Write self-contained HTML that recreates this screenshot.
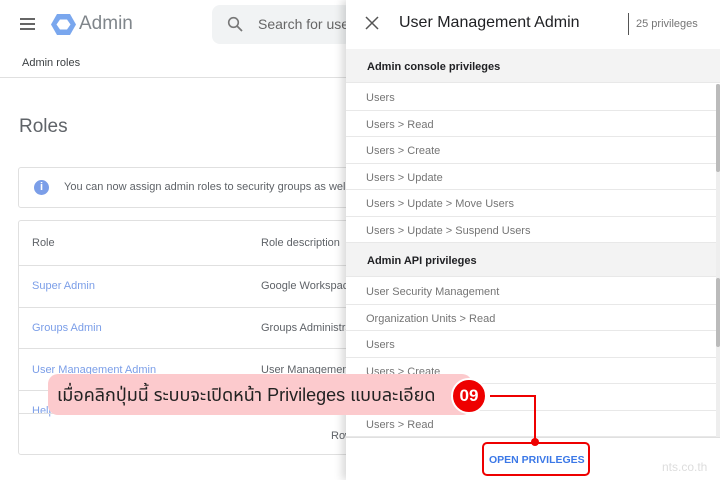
<!DOCTYPE html>
<html><head><meta charset="utf-8"><style>
*{margin:0;padding:0;box-sizing:border-box}
body{width:720px;height:480px;overflow:hidden;background:#fff;font-family:"Liberation Sans",Arial,sans-serif;position:relative;color:#3c4043}
.a{position:absolute}
.t{font-size:12px;color:#5f6368;white-space:nowrap}
.link{color:#7b9ee8}
.row{position:absolute;left:346px;width:370px;height:26.5px;border-bottom:1px solid #e8e8e8;font-size:11px;color:#757575;padding:8px 0 0 20px;background:#fff}
.sec{position:absolute;left:346px;width:374px;height:34px;background:#f3f3f3;font-size:11px;font-weight:bold;color:#202124;padding:12px 0 0 21px;border-bottom:1px solid #e8e8e8}
</style></head><body>
<div class="a" style="left:20px;top:18px;width:15px;height:2px;background:#666;box-shadow:0 5px 0 #666,0 10px 0 #666"></div>
<svg class="a" style="left:51px;top:13px" width="25" height="23" viewBox="0 0 25 23"><polygon points="6,1 19,1 25,11.5 19,22 6,22 0,11.5" fill="#7aa7ee"/><polygon points="9,6.5 16,6.5 19.5,11.5 16,16.5 9,16.5 5.5,11.5" fill="#fff"/></svg>
<div class="a" style="left:79px;top:13px;font-size:19px;color:#80868b">Admin</div>
<div class="a" style="left:212px;top:5px;width:140px;height:39px;background:#f1f3f4;border-radius:8px"></div>
<svg class="a" style="left:227px;top:16px" width="16" height="16" viewBox="0 0 16 16"><circle cx="6.5" cy="6.5" r="4.8" fill="none" stroke="#777" stroke-width="1.6"/><path d="M10 10l5 5" stroke="#777" stroke-width="1.8"/></svg>
<div class="a" style="left:258px;top:16px;font-size:14px;color:#666">Search for users</div>
<div class="a" style="left:22px;top:57px;font-size:11px;color:#3c4043">Admin roles</div>
<div class="a" style="left:0;top:77px;width:346px;height:1px;background:#e0e0e0"></div>
<div class="a" style="left:19px;top:116px;font-size:19px;color:#5f6368">Roles</div>
<div class="a" style="left:18px;top:167px;width:340px;height:41px;border:1px solid #e0e0e0;border-radius:3px"></div>
<div class="a" style="left:34px;top:180px;width:15px;height:15px;border-radius:50%;background:#7b9ee8;color:#fff;font-size:11px;font-weight:bold;text-align:center;line-height:15px">i</div>
<div class="a t" style="left:64px;top:181px;font-size:11px">You can now assign admin roles to security groups as well</div>
<div class="a" style="left:18px;top:220px;width:340px;height:235px;border:1px solid #e0e0e0;border-radius:3px"></div>
<div class="a t" style="left:32px;top:237px;font-size:11px">Role</div>
<div class="a t" style="left:261px;top:237px;font-size:11px">Role description</div>
<div class="a" style="left:19px;top:265px;width:330px;height:1px;background:#e0e0e0"></div>
<div class="a t link" style="left:32px;top:280px;font-size:11px">Super Admin</div>
<div class="a t" style="left:261px;top:280px;font-size:11px">Google Workspace</div>
<div class="a" style="left:19px;top:307px;width:330px;height:1px;background:#e0e0e0"></div>
<div class="a t link" style="left:32px;top:322px;font-size:11px">Groups Admin</div>
<div class="a t" style="left:261px;top:322px;font-size:11px">Groups Administrator</div>
<div class="a" style="left:19px;top:348px;width:330px;height:1px;background:#e0e0e0"></div>
<div class="a t link" style="left:32px;top:364px;font-size:11px">User Management Admin</div>
<div class="a t" style="left:261px;top:364px;font-size:11px">User Management</div>
<div class="a" style="left:19px;top:390px;width:330px;height:1px;background:#e0e0e0"></div>
<div class="a t link" style="left:32px;top:405px;font-size:11px">Help</div>
<div class="a" style="left:19px;top:413px;width:330px;height:1px;background:#e0e0e0"></div>
<div class="a t" style="left:331px;top:430px;font-size:11px">Rows</div>
<div class="a" style="left:346px;top:0;width:374px;height:480px;background:#fff;box-shadow:-4px 0 8px rgba(0,0,0,.15)"></div>
<svg class="a" style="left:365px;top:16px" width="14" height="14" viewBox="0 0 14 14"><path d="M1 1L13 13M13 1L1 13" stroke="#555" stroke-width="1.5"/></svg>
<div class="a" style="left:399px;top:14px;font-size:16px;color:#202124">User Management Admin</div>
<div class="a" style="left:628px;top:13px;width:1px;height:22px;background:#555"></div>
<div class="a" style="left:636px;top:18px;font-size:11px;color:#757575">25 privileges</div>
<div class="sec" style="top:49px">Admin console privileges</div>
<div class="row" style="top:84px">Users</div>
<div class="row" style="top:110.5px">Users &gt; Read</div>
<div class="row" style="top:137px">Users &gt; Create</div>
<div class="row" style="top:163.5px">Users &gt; Update</div>
<div class="row" style="top:190px">Users &gt; Update &gt; Move Users</div>
<div class="row" style="top:216.5px">Users &gt; Update &gt; Suspend Users</div>
<div class="sec" style="top:243px">Admin API privileges</div>
<div class="row" style="top:278px">User Security Management</div>
<div class="row" style="top:304.5px">Organization Units &gt; Read</div>
<div class="row" style="top:331px">Users</div>
<div class="row" style="top:357.5px">Users &gt; Create</div>
<div class="row" style="top:384px"></div>
<div class="row" style="top:410.5px">Users &gt; Read</div>
<div class="a" style="left:716px;top:84px;width:4px;height:353px;background:#eee"></div>
<div class="a" style="left:716px;top:84px;width:4px;height:88px;background:#bbb;border-radius:2px"></div>
<div class="a" style="left:716px;top:278px;width:4px;height:69px;background:#bbb;border-radius:2px"></div>
<div class="a" style="left:346px;top:437px;width:374px;height:43px;background:#fff;border-top:1px solid #e0e0e0"></div>
<div class="a" style="left:482px;top:442px;width:108px;height:34px;border:2px solid #e00;border-radius:5px"></div>
<div class="a" style="left:489px;top:454px;font-size:10.5px;font-weight:bold;color:#3b78e7">OPEN PRIVILEGES</div>
<div class="a" style="left:662px;top:460px;font-size:12px;color:#ddd">nts.co.th</div>
<div class="a" style="left:48px;top:374px;width:424px;height:41px;background:#fccacd;border-radius:10px"></div>
<div class="a" style="left:57px;top:383px;font-size:18px;color:#222;white-space:nowrap;font-family:'Liberation Sans','Noto Sans Thai','Garuda','Loma',sans-serif">เมื่อคลิกปุ่มนี้ ระบบจะเปิดหน้า Privileges แบบละเอียด</div>
<div class="a" style="left:451px;top:378px;width:36px;height:36px;border-radius:50%;background:#e00;border:2px solid #fff;color:#fff;font-weight:bold;font-size:17px;text-align:center;line-height:32px">09</div>
<div class="a" style="left:490px;top:395px;width:46px;height:2px;background:#e00"></div>
<div class="a" style="left:534px;top:395px;width:2px;height:47px;background:#e00"></div>
<div class="a" style="left:531px;top:438px;width:8px;height:8px;border-radius:50%;background:#e00"></div>
</body></html>
